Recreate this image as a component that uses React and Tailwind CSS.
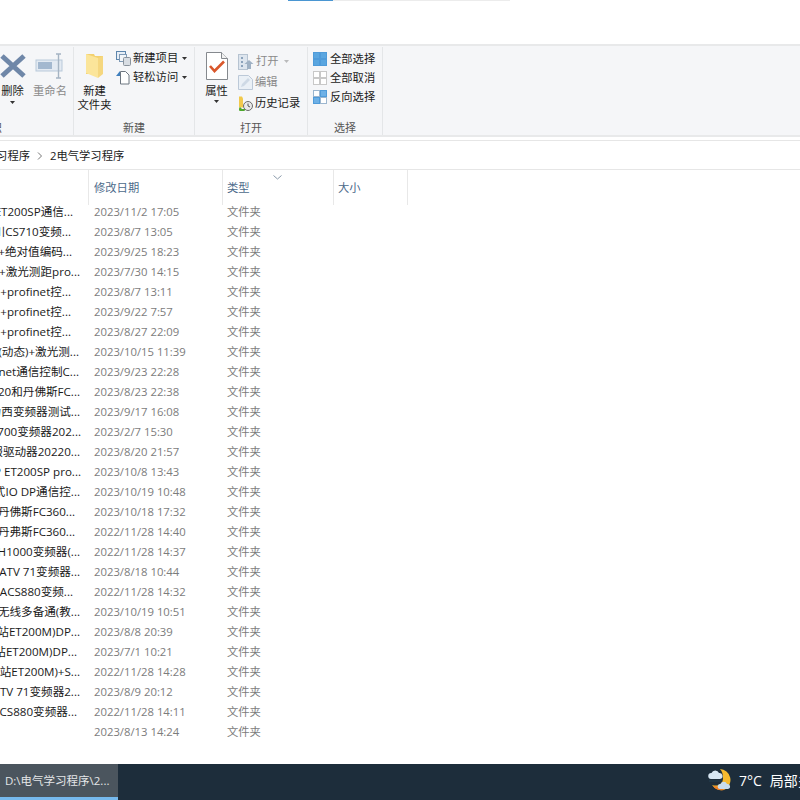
const rows = [
  ["ET200SP通信...", "w-[73px]", "2023/11/2 17:05"],
  ["川CS710变频...", "w-[71px]", "2023/8/7 13:05"],
  ["+绝对值编码...", "w-[72px]", "2023/9/25 18:23"],
  ["+激光测距pro...", "w-[80px]", "2023/7/30 14:15"],
  ["+profinet控...", "w-[71px]", "2023/8/7 13:11"],
  ["+profinet控...", "w-[71px]", "2023/9/22 7:57"],
  ["+profinet控...", "w-[71px]", "2023/8/27 22:09"],
  ["(动态)+激光测...", "w-[79px]", "2023/10/15 11:39"],
  ["inet通信控制C...", "w-[79px]", "2023/9/23 22:28"],
  ["20和丹佛斯FC...", "w-[80px]", "2023/8/23 22:38"],
  ["力西变频器测试...", "w-[80px]", "2023/9/17 16:08"],
  ["700变频器202...", "w-[81px]", "2023/2/7 15:30"],
  ["服驱动器20220...", "w-[80px]", "2023/8/20 21:57"],
  ["P ET200SP pro...", "w-[81px]", "2023/10/8 13:43"],
  ["式IO DP通信控...", "w-[80px]", "2023/10/19 10:48"],
  ["丹佛斯FC360...", "w-[75px]", "2023/10/18 17:32"],
  ["丹弗斯FC360...", "w-[75px]", "2022/11/28 14:40"],
  ["H1000变频器(...", "w-[80px]", "2022/11/28 14:37"],
  ["ATV 71变频器...", "w-[80px]", "2023/8/18 10:44"],
  ["ACS880变频...", "w-[73px]", "2022/11/28 14:32"],
  ["无线多备通(教...", "w-[80px]", "2023/10/19 10:51"],
  ["站ET200M)DP...", "w-[80px]", "2023/8/8 20:39"],
  ["站ET200M)DP...", "w-[77px]", "2023/7/1 10:21"],
  ["站ET200M)+S...", "w-[80px]", "2022/11/28 14:28"],
  ["TV 71变频器2...", "w-[80px]", "2023/8/9 20:12"],
  ["CS880变频器...", "w-[77px]", "2022/11/28 14:11"],
  ["", "w-[77px]", "2023/8/13 14:24"],
];

const DownTri = ({ className = "" }) => (
  <svg width="5" height="3" viewBox="0 0 5 3" className={className}><path d="M0 0h5L2.5 3z" fill="#333" /></svg>
);

const DeleteIcon = () => (
  <svg width="26" height="26" viewBox="0 0 26 26" className="shrink-0">
    <path d="M2 3l22 20M24 3L2 23" stroke="#6f87a8" strokeWidth="5" />
  </svg>
);
const RenameIcon = () => (
  <svg width="30" height="26" viewBox="0 0 30 26" className="shrink-0">
    <rect x="1" y="7" width="26" height="11" fill="#e3eaf2" stroke="#b9c9da" />
    <rect x="3" y="9" width="14" height="7" fill="#a3b8cf" />
    <path d="M21 1h2.5M26 1h-2.5v24M21 25h2.5M26 25h-2.5" stroke="#a5b4c3" strokeWidth="1.4" fill="none" />
  </svg>
);
const FolderIcon = () => (
  <svg width="20" height="26" viewBox="0 0 20 26" className="shrink-0">
    <path d="M1 1h8l1 2h8v18H1z" fill="#f3d16f" />
    <path d="M1 1l12 4v20L1 20z" fill="#fbe59a" />
    <path d="M13 5l5-2v18l-5 4z" fill="#f5d77f" />
  </svg>
);
const NewItemIcon = () => (
  <svg width="15" height="15" viewBox="0 0 15 15" className="shrink-0">
    <rect x=".5" y=".5" width="9" height="8" fill="#e7eef6" stroke="#5d86ad" />
    <rect x="3.5" y="3.5" width="7" height="7" fill="#f3f6f9" stroke="#7f9ab6" />
    <rect x="7.5" y="6.5" width="7" height="8" rx="1" fill="#d8dde3" stroke="#8a939c" />
  </svg>
);
const EasyIcon = () => (
  <svg width="14" height="15" viewBox="0 0 14 15" className="shrink-0">
    <path d="M4.5 1.5h5l3.5 3.5v9h-8.500z" fill="#fff" stroke="#6d7680" />
    <path d="M0 6l4-5v5z" fill="#3f7fbd" />
  </svg>
);
const PropIcon = () => (
  <svg width="22" height="28" viewBox="0 0 22 28" className="shrink-0">
    <path d="M.5.500h15l6 6v21H.5z" fill="#fff" stroke="#85898e" />
    <path d="M15.500.500v6h6" fill="#f1f1f1" stroke="#85898e" />
    <path d="M4 14l4.500 5L18 9.500" fill="none" stroke="#d9572b" strokeWidth="2.600" />
  </svg>
);
const OpenIcon = () => (
  <svg width="16" height="16" viewBox="0 0 16 16" className="shrink-0">
    <rect x=".5" y=".5" width="9" height="15" fill="#dde5ee" stroke="#b6c3d1" />
    <path d="M3 3h2v2H3zM3 7h2v2H3zM3 11h2v2H3z" fill="#8ba2bb" />
    <path d="M11 6l4.500 4H13v5h-4v-5H6.500z" fill="#9fb1c4" />
  </svg>
);
const EditIcon = () => (
  <svg width="15" height="15" viewBox="0 0 15 15" className="shrink-0">
    <path d="M.5.500h10l4 4v10H.5z" fill="#eaf0f6" stroke="#bcc9d8" />
    <path d="M3 12l1-3 6-6 2 2-6 6z" fill="#ced9e5" />
  </svg>
);
const HistoryIcon = () => (
  <svg width="15" height="15" viewBox="0 0 15 15" className="shrink-0">
    <path d="M1 .5h3l1 2v9H1z" fill="#f2c94c" />
    <circle cx="10" cy="10" r="4.500" fill="#e9e9e9" stroke="#6b6b6b" />
    <path d="M10 7.500V10l2 1" stroke="#555" fill="none" />
    <path d="M2 11a3 3 0 1 0 5 2H4z" fill="#4ea72e" />
  </svg>
);
const GridIcon = ({ cells, border }) => (
  <svg width="14" height="14" viewBox="0 0 14 14" className="shrink-0">
    {cells.map((c, i) => (
      <rect key={i} x={i % 2 ? 7.5 : 0.5} y={i < 2 ? 0.5 : 7.5} width="6" height="6" fill={c} stroke={border[i]} />
    ))}
  </svg>
);
const WeatherIcon = () => (
  <svg width="24" height="24" viewBox="0 0 24 24" className="shrink-0">
    <path d="M12 1a11 11 0 0 1 5 20.500A11 11 0 0 1 4 17c6 2 11-1 11-7 0-4-1-7-3-9z" fill="#f5b92e" />
    <path d="M5 18a11 11 0 0 0 11 4l-3-3z" fill="#ef7d22" />
    <path d="M3 11a3 3 0 0 1 .500-6 4 4 0 0 1 7.500 0 3 3 0 0 1 1 6z" fill="#d7e6f2" />
    <path d="M12 21a2.500 2.500 0 0 1 .500-5 3.500 3.500 0 0 1 6.500 0 2.500 2.500 0 0 1 1 5z" fill="#c9dcec" />
    <path d="M1 13h13" stroke="#22384a" strokeWidth="1.500" />
  </svg>
);

function Group({ width, label, children, labelClass = "" }) {
  return (
    <div className={`flex flex-col border-r border-[#e4e6e8] ${width}`}>
      <div className="flex-1 relative flex min-h-0">{children}</div>
      <div className={`h-[19px] leading-[23px] text-center text-[11px] text-[#555] ${labelClass}`}>{label}</div>
    </div>
  );
}

export default function App() {
  return (
    <div className="w-[800px] h-[800px] overflow-hidden flex flex-col bg-white text-[11.3px] text-[#1a1a1a]" style={{ fontFamily: '"Open Sans","Noto Sans CJK SC",sans-serif' }}>
      {/* top strip */}
      <div className="h-[44px] shrink-0 flex items-start pl-[288px]">
        <div className="w-[45px] h-px bg-[#4a96d2]" />
        <div className="w-[177px] h-px bg-[#ececec]" />
      </div>

      {/* ribbon */}
      <div className="h-[93px] shrink-0 flex bg-[#f5f6f8] border-y-2 border-[#e8e9ea] pt-px">
        <Group width="w-[74px]" label="织" labelClass="text-left -ml-[9px]">
          <div className="flex w-full pt-[6px]">
            <div className="w-[25px] flex flex-col items-center">
              <DeleteIcon />
              <span className="mt-[5px] leading-[14px] whitespace-nowrap">删除</span>
              <DownTri className="mt-[3px]" />
            </div>
            <div className="ml-[8px] flex flex-col items-center w-[34px] text-[#8a8a8a]">
              <RenameIcon />
              <span className="mt-[5px] leading-[14px] whitespace-nowrap">重命名</span>
            </div>
          </div>
        </Group>
        <Group width="w-[121px]" label="新建">
          <div className="flex w-full">
            <div className="w-[41px] flex flex-col items-center pt-[6px]">
              <FolderIcon />
              <span className="mt-[5px] leading-[14px]">新建</span>
              <span className="leading-[14px] whitespace-nowrap">文件夹</span>
            </div>
            <div className="flex flex-col gap-[4px] pt-[4px] ml-px">
              <div className="flex items-center gap-[2px] h-[15px] whitespace-nowrap"><NewItemIcon /><span>新建项目</span><DownTri className="ml-[2px]" /></div>
              <div className="flex items-center gap-[2px] h-[15px] whitespace-nowrap"><EasyIcon /><span className="ml-px">轻松访问</span><DownTri className="ml-[2px]" /></div>
            </div>
          </div>
        </Group>
        <Group width="w-[113px]" label="打开">
          <div className="flex w-full">
            <div className="w-[43px] flex flex-col items-center pt-[5px]">
              <PropIcon />
              <span className="mt-[4px] leading-[14px]">属性</span>
              <DownTri className="mt-[2px]" />
            </div>
            <div className="flex flex-col gap-[6px] pt-[7px]">
              <div className="flex items-center gap-[2px] h-[15px] text-[#8a8a8a] whitespace-nowrap"><OpenIcon /><span>打开</span><DownTri className="ml-[3px] opacity-30" /></div>
              <div className="flex items-center gap-[2px] h-[15px] text-[#8a8a8a] whitespace-nowrap"><EditIcon /><span>编辑</span></div>
              <div className="flex items-center gap-[2px] h-[15px] whitespace-nowrap"><HistoryIcon /><span>历史记录</span></div>
            </div>
          </div>
        </Group>
        <Group width="w-[75px]" label="选择">
          <div className="flex flex-col gap-[5px] pt-[5px] pl-[5px]">
            <div className="flex items-center gap-[3px] h-[14px] whitespace-nowrap"><GridIcon cells={["#5aa6e0", "#5aa6e0", "#5aa6e0", "#5aa6e0"]} border={["#4f9bd9", "#4f9bd9", "#4f9bd9", "#4f9bd9"]} /><span>全部选择</span></div>
            <div className="flex items-center gap-[3px] h-[14px] whitespace-nowrap"><GridIcon cells={["#fff", "#fff", "#fff", "#fff"]} border={["#c8c8c8", "#c8c8c8", "#c8c8c8", "#c8c8c8"]} /><span>全部取消</span></div>
            <div className="flex items-center gap-[3px] h-[14px] whitespace-nowrap"><GridIcon cells={["#fff", "#6db0e6", "#6db0e6", "#fff"]} border={["#9cb6cf", "#4f9bd9", "#4f9bd9", "#9cb6cf"]} /><span>反向选择</span></div>
          </div>
        </Group>
      </div>

      <div className="h-[3px] shrink-0" />
      {/* breadcrumb */}
      <div className="h-[30px] shrink-0 flex items-center border-y border-[#e6e6e6] whitespace-nowrap pt-[2px]">
        <div className="w-[30px] flex justify-end"><span className="shrink-0">习程序</span></div>
        <svg width="6" height="8" viewBox="0 0 6 8" className="ml-[7px] mr-[7px]"><path d="M1 .5L4.500 4 1 7.500" fill="none" stroke="#777" /></svg>
        <span>2电气学习程序</span>
      </div>

      {/* header */}
      <div className="relative h-[29px] shrink-0 grid grid-cols-[88px_134px_111px_74px_1fr] text-[#4c6a8a] items-stretch">
        <div />
        <div className="border-l border-[#e8e8e8] pl-[5px] leading-[35px]">修改日期</div>
        <div className="border-l border-[#e8e8e8] pl-[4px] leading-[35px]">类型</div>
        <div className="border-l border-[#e8e8e8] pl-[4px] leading-[35px]">大小</div>
        <div className="border-l border-[#e8e8e8]" />
        <svg width="9" height="5" viewBox="0 0 9 5" className="absolute left-[273px] top-[5px]"><path d="M.5.500L4.500 4l4-3.500" fill="none" stroke="#8a9aaa" /></svg>
      </div>

      {/* rows */}
      <div className="pt-[3px] flex-1 min-h-0">
        {rows.map((r, i) => (
          <div key={i} className="h-[20px] grid grid-cols-[94px_133px_1fr] items-center whitespace-nowrap leading-[20px]">
            <div className={`flex justify-end text-[11.6px] ${r[1]}`}><span className="shrink-0">{r[0]}</span></div>
            <div className="text-[#7c7c7c]">{r[2]}</div>
            <div className="text-[#7c7c7c]">文件夹</div>
          </div>
        ))}
      </div>

      {/* taskbar */}
      <div className="h-[36px] shrink-0 flex bg-[#1d2d3b] text-white whitespace-nowrap">
        <div className="w-[118px] shrink-0 flex items-center pl-[5px] bg-[#4b555e] border-b-[3px] border-[#76b9ed] text-[11.5px] text-[#e4e6e8]">D:\电气学习程序\2...</div>
        <div className="ml-[590px] shrink-0 flex items-center pb-[4px]">
          <WeatherIcon />
          <span className="ml-[7px] text-[14px]">7°C</span>
          <span className="ml-[8px] text-[14px]">局部多云</span>
        </div>
      </div>
    </div>
  );
}
